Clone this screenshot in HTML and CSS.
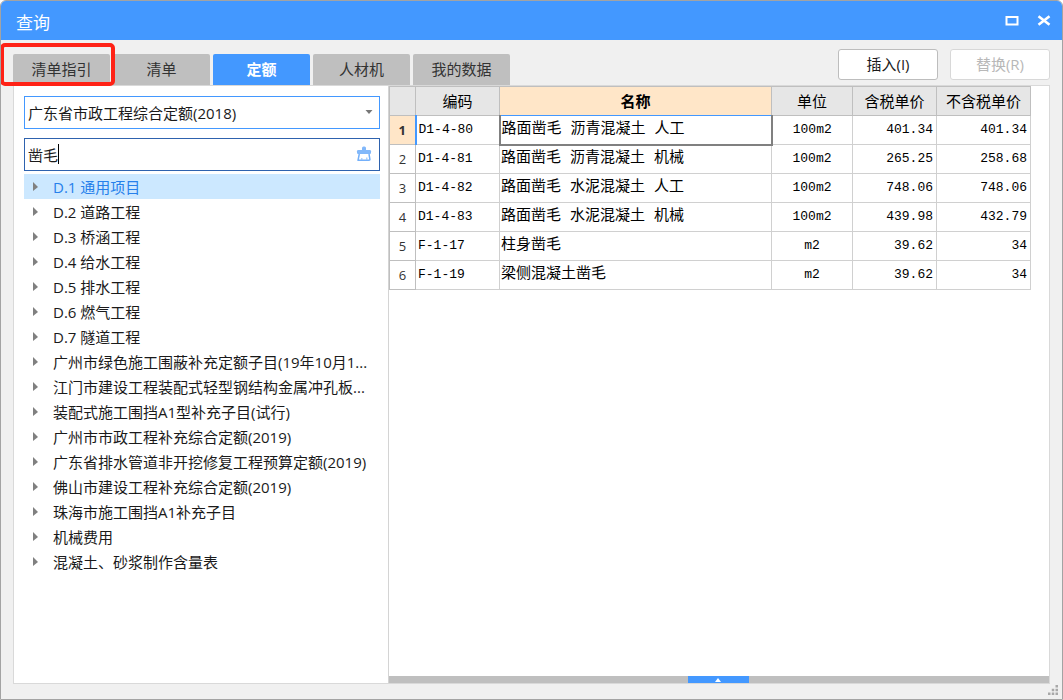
FILE: index.html
```html
<!DOCTYPE html>
<html lang="zh-CN">
<head>
<meta charset="utf-8">
<title>查询</title>
<link rel="stylesheet" href="styles.css">
</head>
<body>
<main class="window">
  <header class="titlebar">
    <h1 class="title">查询</h1>
    <div class="window-controls">
      <button class="window-button" type="button" aria-label="最大化"><svg width="14" height="12" viewBox="0 0 14 12"><rect x="1.5" y="2" width="11" height="7.5" fill="none" stroke="#fff" stroke-width="2"/></svg></button>
      <button class="window-button" type="button" aria-label="关闭"><svg width="14" height="12" viewBox="0 0 14 12"><path d="M1.500 1.200 12.500 9.800M12.500 1.200 1.500 9.800" fill="none" stroke="#fff" stroke-width="2.6"/></svg></button>
    </div>
  </header>

  <div class="toolbar">
    <nav class="tabs">
      <button class="tab tab-marked" type="button">清单指引</button>
      <button class="tab" type="button">清单</button>
      <button class="tab tab-active" type="button">定额</button>
      <button class="tab" type="button">人材机</button>
      <button class="tab" type="button">我的数据</button>
    </nav>
    <div class="actions">
      <button class="action" type="button">插入(I)</button>
      <button class="action" type="button" disabled>替换(R)</button>
    </div>
  </div>

  <div class="content">
    <aside class="sidebar">
      <div class="field">
        <select class="library" aria-label="定额库"><option>广东省市政工程综合定额(2018)</option></select>
        <svg class="library-arrow" width="8" height="5" viewBox="0 0 8 5"><path d="M0.500 0H7.500L4 4Z" fill="#777"/></svg>
      </div>
      <div class="field">
        <input class="search" type="text" value="凿毛" aria-label="查询内容">
        <span class="caret"></span>
        <button class="clear" type="button" aria-label="清除"><svg width="16" height="16" viewBox="0 0 16 16"><rect x="6" y="0.500" width="4" height="5" rx="1.500" fill="#82b8fa"/><rect x="1" y="4" width="14" height="4" rx="1.200" fill="#82b8fa"/><path d="M3.300 8 2 14.300H13Q14 14.300 13.900 13.300L13 8" fill="#fff" stroke="#74b0fa" stroke-width="1.500" stroke-linejoin="round"/><path d="M5.800 14V12M10.800 14V11.500" stroke="#9ac6fb" stroke-width="1.200"/></svg></button>
      </div>
      <ul class="tree">
        <li><button class="node node-active" type="button"><span class="label">D.1 通用项目</span></button></li>
        <li><button class="node" type="button"><span class="label">D.2 道路工程</span></button></li>
        <li><button class="node" type="button"><span class="label">D.3 桥涵工程</span></button></li>
        <li><button class="node" type="button"><span class="label">D.4 给水工程</span></button></li>
        <li><button class="node" type="button"><span class="label">D.5 排水工程</span></button></li>
        <li><button class="node" type="button"><span class="label">D.6 燃气工程</span></button></li>
        <li><button class="node" type="button"><span class="label">D.7 隧道工程</span></button></li>
        <li><button class="node" type="button"><span class="label">广州市绿色施工围蔽补充定额子目(19年10月1...</span></button></li>
        <li><button class="node" type="button"><span class="label">江门市建设工程装配式轻型钢结构金属冲孔板...</span></button></li>
        <li><button class="node" type="button"><span class="label">装配式施工围挡A1型补充子目(试行)</span></button></li>
        <li><button class="node" type="button"><span class="label">广州市市政工程补充综合定额(2019)</span></button></li>
        <li><button class="node" type="button"><span class="label">广东省排水管道非开挖修复工程预算定额(2019)</span></button></li>
        <li><button class="node" type="button"><span class="label">佛山市建设工程补充综合定额(2019)</span></button></li>
        <li><button class="node" type="button"><span class="label">珠海市施工围挡A1补充子目</span></button></li>
        <li><button class="node" type="button"><span class="label">机械费用</span></button></li>
        <li><button class="node" type="button"><span class="label">混凝土、砂浆制作含量表</span></button></li>
      </ul>
    </aside>

    <section class="results">
      <div class="table-area">
        <table class="grid">
          <colgroup><col class="col-index"><col class="col-code"><col><col class="col-unit"><col class="col-price"><col class="col-net"></colgroup>
          <thead>
            <tr><th></th><th>编码</th><th class="sorted">名称</th><th>单位</th><th>含税单价</th><th>不含税单价</th></tr>
          </thead>
          <tbody>
            <tr class="current"><th>1</th><td class="code">D1-4-80</td><td class="name">路面凿毛 沥青混凝土 人工</td><td class="unit">100m2</td><td class="price">401.34</td><td class="price">401.34</td></tr>
            <tr><th>2</th><td class="code">D1-4-81</td><td class="name">路面凿毛 沥青混凝土 机械</td><td class="unit">100m2</td><td class="price">265.25</td><td class="price">258.68</td></tr>
            <tr><th>3</th><td class="code">D1-4-82</td><td class="name">路面凿毛 水泥混凝土 人工</td><td class="unit">100m2</td><td class="price">748.06</td><td class="price">748.06</td></tr>
            <tr><th>4</th><td class="code">D1-4-83</td><td class="name">路面凿毛 水泥混凝土 机械</td><td class="unit">100m2</td><td class="price">439.98</td><td class="price">432.79</td></tr>
            <tr><th>5</th><td class="code">F-1-17</td><td class="name">柱身凿毛</td><td class="unit">m2</td><td class="price">39.62</td><td class="price">34</td></tr>
            <tr><th>6</th><td class="code">F-1-19</td><td class="name">梁侧混凝土凿毛</td><td class="unit">m2</td><td class="price">39.62</td><td class="price">34</td></tr>
          </tbody>
        </table>
      </div>
      <div class="splitter">
        <button class="expand" type="button" aria-label="展开"><svg width="8" height="4" viewBox="0 0 8 4"><path d="M4 0 7 4H1Z" fill="#fff"/></svg></button>
      </div>
    </section>
  </div>
  <footer class="statusbar">
    <svg width="10" height="10" viewBox="0 0 10 10" fill="#a8a8a8"><path d="M7.500 0H10V2.500H7.500ZM7.500 3.750H10V6.250H7.500ZM7.500 7.500H10V10H7.500ZM3.750 3.750H6.250V6.250H3.750ZM3.750 7.500H6.250V10H3.750ZM0 7.500H2.500V10H0Z"/></svg>
  </footer>
</main>
</body>
</html>
```
FILE: styles.css
```css
* {
  box-sizing: border-box;
}

body {
  margin: 0;
  background: #fff;
  color: #1a1a1a;
  font: 15px/20px "Open Sans", "Noto Sans CJK SC", sans-serif;
}

button,
input,
select {
  margin: 0;
  padding: 0;
  border: 0;
  border-radius: 0;
  background: none;
  color: inherit;
  font: inherit;
}

.window {
  display: flex;
  flex-direction: column;
  height: 100vh;
  border: 1px solid #a3a3a3;
  border-radius: 6px 6px 0 0;
  background: #f0f0f0;
  overflow: hidden;
}

.titlebar {
  display: flex;
  align-items: center;
  justify-content: space-between;
  height: 39px;
  padding: 4px 11px 0 15px;
  background: #4398ff;
  color: #fff;
}

.title {
  margin: 0;
  font-size: 17px;
  font-weight: 400;
}

.window-controls {
  display: flex;
  gap: 18px;
  padding-bottom: 4px;
}

.window-button {
  display: flex;
}

.toolbar {
  display: flex;
  align-items: flex-end;
  justify-content: space-between;
  height: 45px;
  padding: 0 12px;
}

.tabs {
  display: flex;
  gap: 3px;
}

.tab {
  position: relative;
  width: 97px;
  height: 31px;
  padding-bottom: 2px;
  border-radius: 2px 2px 0 0;
  background: #bfbfbf;
  color: #333;
}

.tab-active {
  background: #4398ff;
  color: #fff;
  font-weight: 700;
}

.tab-marked::after {
  content: "";
  position: absolute;
  z-index: 1;
  inset: -11px -5px -1px -13px;
  border: 4px solid #ff2216;
  border-radius: 5px;
}

.actions {
  display: flex;
  gap: 12px;
  padding-bottom: 5px;
}

.action {
  width: 100px;
  height: 31px;
  padding-bottom: 2px;
  border: 1px solid #bdbdbd;
  border-radius: 3px;
  background: #fff;
}

.action:disabled {
  border-color: #d8d8d8;
  color: #b8b8b8;
}

.content {
  display: flex;
  flex: 1;
  min-height: 0;
  margin: 0 12px;
  border: 1px solid #d9d9d9;
  background: #fff;
}

.sidebar {
  flex: 0 0 375px;
  padding: 10px 8px 0 10px;
  border-right: 1px solid #d4d4d4;
}

.field {
  position: relative;
  margin-bottom: 9px;
}

.library,
.search {
  display: block;
  width: 100%;
  height: 33px;
  padding: 0 24px 0 3px;
  border: 1px solid #4398ff;
  background: #fff;
  appearance: none;
  outline: none;
}

.search {
  border-color: #2e62ae;
}

.library-arrow {
  position: absolute;
  top: 14px;
  right: 7px;
}

.caret {
  position: absolute;
  top: 6px;
  left: 34px;
  width: 1px;
  height: 20px;
  background: #000;
}

.clear {
  position: absolute;
  top: 8px;
  right: 8px;
  display: flex;
}

.tree {
  margin: -6px 0 0;
  padding: 0;
  list-style: none;
}

.node {
  display: flex;
  align-items: center;
  gap: 15px;
  width: 100%;
  height: 25px;
  padding-left: 9px;
  text-align: left;
  white-space: nowrap;
}

.node::before {
  content: "";
  border: solid transparent;
  border-width: 5px 0 4px 5px;
  border-left-color: #808080;
}

.node-active {
  background: #cce8ff;
  color: #2680eb;
}

.results {
  display: flex;
  flex: 1;
  flex-direction: column;
  min-width: 0;
}

.table-area {
  flex: 1;
  padding-right: 18px;
}

.grid {
  width: 100%;
  border-collapse: collapse;
  table-layout: fixed;
  color: #000;
}

.col-index {
  width: 26px;
}

.col-code {
  width: 84px;
}

.col-unit {
  width: 81px;
}

.col-price {
  width: 84px;
}

.col-net {
  width: 94px;
}

.grid th,
.grid td {
  height: 29px;
  padding: 0 3px;
  border: 1px solid #d0d0d0;
  white-space: nowrap;
}

.grid th {
  padding: 0;
  border-color: #bfbfbf;
  font-weight: 400;
}

.grid thead th {
  background: #e6e6e6;
}

.grid thead .sorted {
  border-bottom-color: #4398ff;
  background: #ffe6c8;
  font-weight: 700;
}

.grid tbody th {
  color: #333;
  font-size: 13px;
}

.grid .current th {
  border-right: 2px solid #4398ff;
  background: #ffe6c8;
  font-weight: 700;
}

.grid .current .name {
  border: 2px solid #808080;
  border-top: 1px solid #4398ff;
}

.grid .code,
.grid .unit,
.grid .price {
  font-family: "Liberation Mono", monospace;
  font-size: 13px;
}

.grid .code {
  padding-left: 2px;
}

.grid .name {
  padding-left: 1px;
  font-family: "Liberation Mono", "Noto Sans CJK SC", monospace;
}

.grid .unit {
  text-align: center;
}

.grid .price {
  text-align: right;
}

.splitter {
  display: flex;
  justify-content: center;
  height: 7px;
  padding-right: 2px;
  background: #bfbfbf;
}

.expand {
  display: flex;
  align-items: center;
  justify-content: center;
  width: 61px;
  height: 7px;
  background: #4398ff;
}

.statusbar {
  display: flex;
  align-items: center;
  justify-content: flex-end;
  height: 15px;
  padding: 0 4px 4px 0;
}
```
